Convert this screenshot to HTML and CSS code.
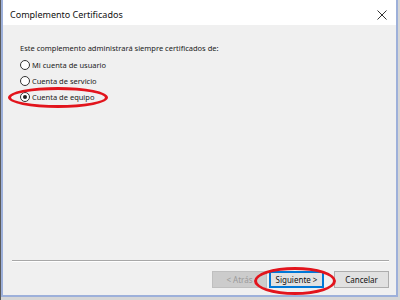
FILE: index.html
```html
<!doctype html>
<html lang="es">
  <head>
    <meta charset="utf-8">
    <title>Complemento Certificados</title>
    <link rel="stylesheet" href="styles.css">
  </head>
  <body>
    <div class="desk">
      <div class="win">
        <div class="titlebar">
          <span class="title">Complemento Certificados</span>
          <svg class="close" width="10" height="10" viewBox="0 0 10 10">
            <path d="M0.5 0.5 L9.5 9.5 M9.5 0.5 L0.5 9.5" stroke="#333" stroke-width="1" fill="none"/>
          </svg>
        </div>
        <div class="body">
          <p class="prompt">Este complemento administrará siempre certificados de:</p>
          <div class="options">
            <label class="opt"><span class="radio"></span>Mi cuenta de usuario</label>
            <label class="opt"><span class="radio"></span>Cuenta de servicio</label>
            <label class="opt"><span class="radio on"></span>Cuenta de equipo</label>
          </div>
          <div class="fill"></div>
          <div class="sep"></div>
          <div class="buttons">
            <span class="btn off">&lt; Atrás</span>
            <span class="btn focus">Siguiente &gt;</span>
            <span class="btn gap">Cancelar</span>
          </div>
        </div>
        <div class="mark m1"></div>
        <div class="mark m2"></div>
      </div>
    </div>
  </body>
</html>
```

FILE: styles.css
```css
html, body
{
	margin: 0;
	padding: 0;
	overflow: hidden;
}

body
{
	background-color: #d6d6d6;
	font-family: "Noto Sans", "DejaVu Sans", sans-serif;
	color: #1a1a1a;
}

.desk
{
	width: 400px;
	height: 300px;
	padding: 0 2px 3px 1px;
	box-sizing: border-box;
	display: flex;
	background: linear-gradient(to right, #5a5a5a 0, #5a5a5a 1px, #d6d6d6 1px);
}

.win
{
	position: relative;
	flex: 1;
	display: flex;
	flex-direction: column;
	border: 2px solid #9db0da;
	border-top: 0;
	background-color: #f0f0f0;
}

.titlebar
{
	height: 25px;
	display: flex;
	align-items: center;
	justify-content: space-between;
	padding: 4px 8px 0 7px;
	box-sizing: border-box;
	background-color: #ffffff;
}

.title
{
	font-size: 9px;
	color: #111;
}

.close
{
	display: block;
	margin-right: 1px;
}

.body
{
	flex: 1;
	display: flex;
	flex-direction: column;
	padding: 0 7px 7px 8px;
	font-size: 7.5px;
}

.prompt
{
	margin: 18px 0 7px 9px;
	line-height: 10px;
}

.options
{
	display: flex;
	flex-direction: column;
	gap: 6px;
	padding-left: 9px;
}

.opt
{
	display: flex;
	align-items: center;
	gap: 2px;
	line-height: 10px;
}

.radio
{
	width: 8px;
	height: 8px;
	border: 1px solid #333;
	border-radius: 50%;
	background-color: #fff;
	display: flex;
	align-items: center;
	justify-content: center;
}

.radio.on::after
{
	content: "";
	width: 4px;
	height: 4px;
	border-radius: 50%;
	background-color: #222;
}

.fill
{
	flex: 1;
}

.sep
{
	height: 1px;
	margin: 0 0 9px 1px;
	background-color: #a8a8a8;
	border-bottom: 1px solid #ffffff;
}

.buttons
{
	display: flex;
	justify-content: flex-end;
	align-items: center;
}

.btn
{
	width: 55px;
	height: 17px;
	box-sizing: border-box;
	display: flex;
	align-items: center;
	justify-content: center;
	border: 1px solid #adadad;
	background-color: #e1e1e1;
	color: #111;
	font-size: 8px;
}

.btn.off
{
	background-color: #cccccc;
	border-color: #bfbfbf;
	color: #9a9a9a;
	margin-right: 2px;
}

.btn.focus
{
	border: 2px solid #0078d7;
}

.btn.gap
{
	margin-left: 10px;
}

.mark
{
	position: absolute;
	border: 3px solid #e2141c;
	border-radius: 50%;
	box-sizing: border-box;
}

.m1
{
	left: 5px;
	top: 87px;
	width: 100px;
	height: 21px;
}

.m2
{
	left: 251px;
	top: 267px;
	width: 82px;
	height: 28px;
}
```
